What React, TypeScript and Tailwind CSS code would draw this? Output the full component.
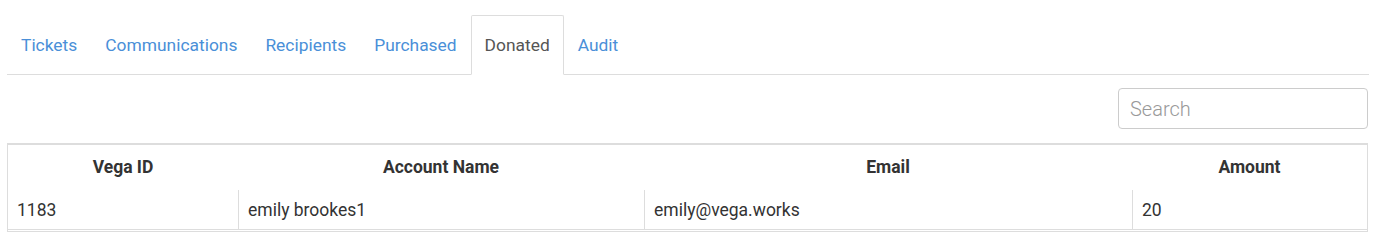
import { useState } from 'react';

const tabs = ['Tickets', 'Communications', 'Recipients', 'Purchased', 'Donated', 'Audit'];

const columns = [
  { key: 'id', label: 'Vega ID', width: 'w-[230px]' },
  { key: 'name', label: 'Account Name', width: 'w-[406px]' },
  { key: 'email', label: 'Email', width: 'w-[488px]' },
  { key: 'amount', label: 'Amount', width: 'flex-1' },
];

const rows = [{ id: '1183', name: 'emily brookes1', email: 'emily@vega.works', amount: '20' }];

const App = () => {
  const [active, setActive] = useState('Donated');
  const [query, setQuery] = useState('');

  return (
    <div className="ml-[7px] w-[1362px] pt-[15px] text-[17.5px] text-[#333] [font-family:Roboto,'Liberation_Sans',sans-serif]">
      {/* tabs */}
      <ul className="flex border-b border-[#ddd] text-[17.4px]">
        {tabs.map((tab) => {
          const isActive = tab === active;
          return (
            <li key={tab} className="-mb-px">
              <button
                type="button"
                onClick={() => setActive(tab)}
                className={
                  isActive
                    ? 'h-[60px] pt-px px-[13px] border border-[#ddd] border-b-white bg-white text-[#555] rounded-t-[2px]'
                    : 'h-[60px] pt-px px-[13px] border border-transparent text-[#4a8fd8]'
                }
              >
                {tab}
              </button>
            </li>
          );
        })}
      </ul>

      {/* search */}
      <div className="flex justify-end pt-[13px] pr-px">
        <input
          value={query}
          onChange={(e) => setQuery(e.target.value)}
          placeholder="Search"
          className="w-[250px] h-[41px] px-[11px] rounded-[4px] border border-[#ccc] text-[20px] font-light outline-none placeholder:text-[#999]"
        />
      </div>

      {/* table */}
      <div className="mt-[14px] w-[1361px] border-x border-t-2 border-b border-[#ddd] pb-px">
        <div className="flex h-[45px] items-center font-bold">
          {columns.map((col) => (
            <div key={col.key} className={`${col.width} text-center`}>
              {col.label}
            </div>
          ))}
        </div>
        {rows.map((row) => (
          <div key={row.id} className="flex h-[40px] border-b border-[#ddd]">
            {columns.map((col, i) => (
              <div
                key={col.key}
                className={`${col.width} flex items-center pt-px px-[9px] ${i > 0 ? 'border-l border-[#ddd]' : ''}`}
              >
                {row[col.key as keyof typeof row]}
              </div>
            ))}
          </div>
        ))}
      </div>
    </div>
  );
};

export default App;
